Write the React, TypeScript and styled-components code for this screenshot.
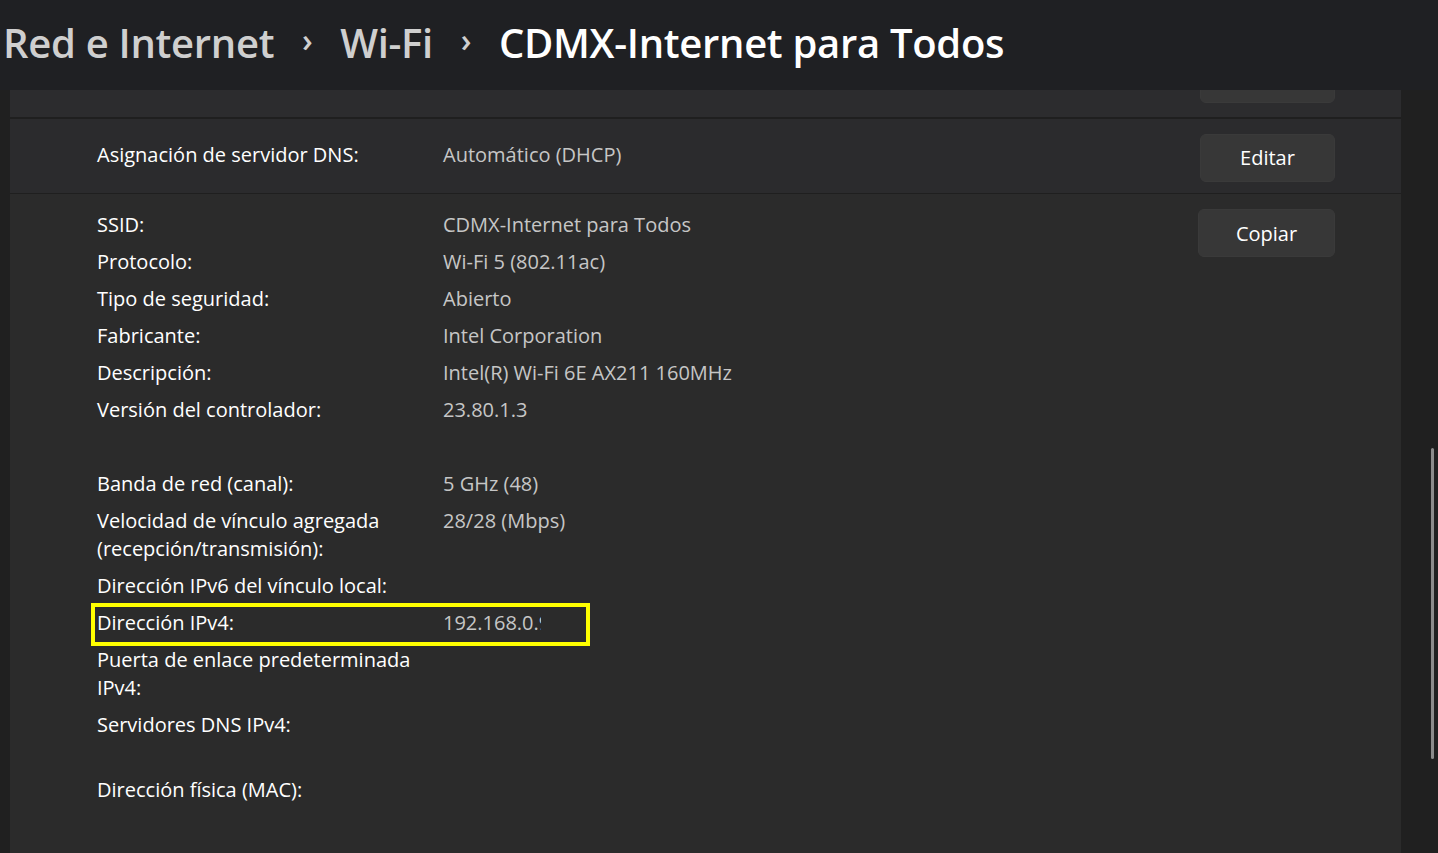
import React from "react";
import styled, { createGlobalStyle } from "styled-components";

const Global = createGlobalStyle`
  html, body { margin: 0; padding: 0; background: #202020; }
  body { font-family: "Open Sans", "Noto Sans", sans-serif; color: #fff; }
  * { box-sizing: border-box; }
`;

const Page = styled.div`
  width: 1438px;
  height: 853px;
  overflow: hidden;
  display: flex;
  flex-direction: column;
  background: #202020;
`;

const Header = styled.header`
  height: 90px;
  flex: none;
  background: #1f2023;
  display: flex;
  align-items: center;
  padding: 0 0 6px 3px;
  font-size: 40px;
  font-weight: 600;
  letter-spacing: -0.3px;
`;

const Crumb = styled.span<{ $current?: boolean }>`
  color: ${(p) => (p.$current ? "#ffffff" : "#cfcfcf")};
  white-space: nowrap;
`;

const Chevron = styled.span`
  color: #cfcfcf;
  font-size: 32px;
  font-weight: 600;
  width: 66px;
  text-align: center;
  margin-top: -6px;
`;

const Body = styled.div`
  flex: 1;
  display: flex;
  min-height: 0;
`;

const Gutter = styled.div`
  width: 10px;
  flex: none;
  background: #202020;
`;

const Panel = styled.main`
  width: 1391px;
  flex: none;
  display: flex;
  flex-direction: column;
  background: #2b2b2b;
`;

const RightRail = styled.div`
  flex: 1;
  background: #202020;
  display: flex;
  justify-content: flex-end;
  padding: 358px 4px 0 0;
`;

const ScrollThumb = styled.div`
  width: 3px;
  height: 311px;
  border-radius: 2px;
  background: #8b8b8b;
`;

const TopCard = styled.section`
  height: 27px;
  flex: none;
  overflow: hidden;
  background: #2c2c2e;
  display: flex;
  justify-content: flex-end;
  align-items: flex-end;
  padding: 0 66px 14px 0;
`;

const Divider = styled.div<{ $h: number }>`
  height: ${(p) => p.$h}px;
  flex: none;
  background: #1f1f1f;
`;

const Button = styled.button<{ $w: number }>`
  width: ${(p) => p.$w}px;
  height: 48px;
  flex: none;
  border-radius: 6px;
  border: 1px solid #3a3a3a;
  background: #373737;
  color: #ffffff;
  font-family: inherit;
  font-size: 20px;
  padding: 0;
`;

const DnsRow = styled.section`
  height: 74px;
  flex: none;
  background: #2b2b2d;
  display: flex;
  align-items: center;
  padding: 0 66px 0 87px;
`;

const DnsLabel = styled.div`
  width: 346px;
  flex: none;
  font-size: 20px;
  color: #ffffff;
  margin-top: -4px;
`;

const DnsValue = styled.div`
  flex: 1;
  font-size: 20px;
  color: #c6c6c6;
  margin-top: -4px;
`;

const EditButton = styled(Button)`
  margin-top: 3px;
`;

const Details = styled.section`
  flex: 1;
  display: flex;
  align-items: flex-start;
  padding: 17px 66px 0 87px;
  background: #2b2b2b;
`;

const List = styled.div`
  flex: 1;
  display: flex;
  flex-direction: column;
  gap: 9px;
`;

const Row = styled.div<{ $lines?: number }>`
  position: relative;
  display: grid;
  grid-template-columns: 346px 1fr;
  min-height: ${(p) => (p.$lines || 1) * 28}px;
  font-size: 20px;
  line-height: 28px;
`;

const Label = styled.div`
  color: #ffffff;
  padding-right: 20px;
`;

const Value = styled.div<{ $clip?: number }>`
  color: #c6c6c6;
  white-space: nowrap;
  ${(p) => (p.$clip ? `width: ${p.$clip}px; overflow: hidden;` : "")}
`;

const Highlight = styled.div`
  position: absolute;
  left: -6px;
  top: -6px;
  width: 499px;
  height: 43px;
  border: 4px solid #ffff00;
  pointer-events: none;
`;

const CopyButton = styled(Button)`
  margin-top: -2px;
`;

type Item = { label: React.ReactNode; value?: string; lines?: number; clip?: number; mark?: boolean };

const items: Item[] = [
  { label: "SSID:", value: "CDMX-Internet para Todos" },
  { label: "Protocolo:", value: "Wi-Fi 5 (802.11ac)" },
  { label: "Tipo de seguridad:", value: "Abierto" },
  { label: "Fabricante:", value: "Intel Corporation" },
  { label: "Descripción:", value: "Intel(R) Wi-Fi 6E AX211 160MHz" },
  { label: "Versión del controlador:", value: "23.80.1.3" },
  { label: "" },
  { label: "Banda de red (canal):", value: "5 GHz (48)" },
  {
    label: (
      <>
        Velocidad de vínculo agregada
        <br />
        (recepción/transmisión):
      </>
    ),
    value: "28/28 (Mbps)",
    lines: 2,
  },
  { label: "Dirección IPv6 del vínculo local:" },
  { label: "Dirección IPv4:", value: "192.168.0.9", clip: 98, mark: true },
  {
    label: (
      <>
        Puerta de enlace predeterminada
        <br />
        IPv4:
      </>
    ),
    lines: 2,
  },
  { label: "Servidores DNS IPv4:", lines: 2 },
  { label: "Dirección física (MAC):" },
];

export default function App() {
  return (
    <>
      <Global />
      <Page>
        <Header>
          <Crumb>Red e Internet</Crumb>
          <Chevron>›</Chevron>
          <Crumb>Wi-Fi</Crumb>
          <Chevron>›</Chevron>
          <Crumb $current>CDMX-Internet para Todos</Crumb>
        </Header>
        <Body>
          <Gutter />
          <Panel>
            <TopCard>
              <Button $w={135} />
            </TopCard>
            <Divider $h={2} />
            <DnsRow>
              <DnsLabel>Asignación de servidor DNS:</DnsLabel>
              <DnsValue>Automático (DHCP)</DnsValue>
              <EditButton $w={135}>Editar</EditButton>
            </DnsRow>
            <Divider $h={1} />
            <Details>
              <List>
                {items.map((it, i) => (
                  <Row key={i} $lines={it.lines}>
                    <Label>{it.label}</Label>
                    <Value $clip={it.clip}>{it.value}</Value>
                    {it.mark && <Highlight />}
                  </Row>
                ))}
              </List>
              <CopyButton $w={137}>Copiar</CopyButton>
            </Details>
          </Panel>
          <RightRail>
            <ScrollThumb />
          </RightRail>
        </Body>
      </Page>
    </>
  );
}
